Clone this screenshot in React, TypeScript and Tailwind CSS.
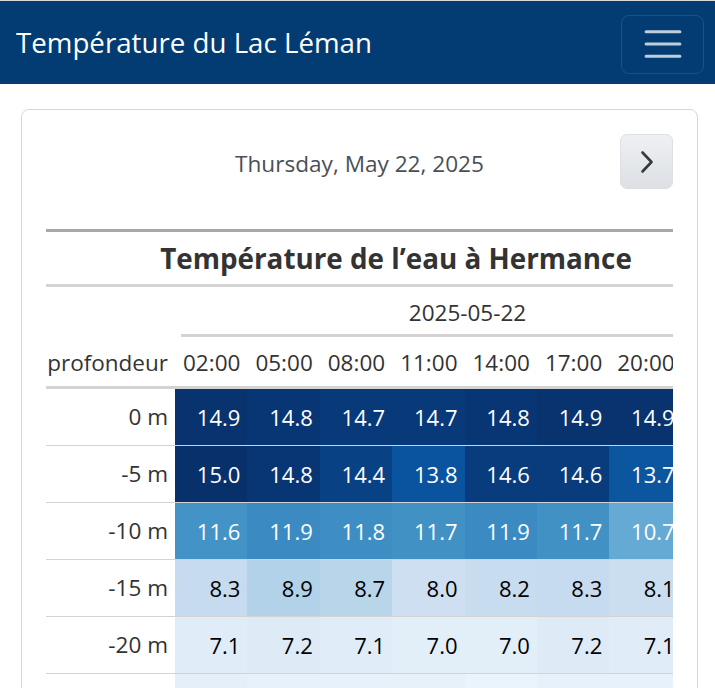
import React from "react";

// matplotlib "Blues" stops
const BLUES = ["#f7fbff", "#deebf7", "#c6dbef", "#9ecae1", "#6baed6", "#4292c6", "#2171b5", "#08519c", "#08306b"];
const VMIN = 6.07;
const VMAX = 15.0;

const hexToRgb = (h: string) => [parseInt(h.slice(1, 3), 16), parseInt(h.slice(3, 5), 16), parseInt(h.slice(5, 7), 16)];

const cellColor = (v: number) => {
  let t = (v - VMIN) / (VMAX - VMIN);
  t = Math.max(0, Math.min(1, t));
  const pos = t * (BLUES.length - 1);
  const i = Math.min(Math.floor(pos), BLUES.length - 2);
  const f = pos - i;
  const a = hexToRgb(BLUES[i]);
  const b = hexToRgb(BLUES[i + 1]);
  const rgb = a.map((c, k) => Math.round(c + (b[k] - c) * f));
  return { bg: `rgb(${rgb[0]}, ${rgb[1]}, ${rgb[2]})`, light: t > 0.5 };
};

const hours = ["02:00", "05:00", "08:00", "11:00", "14:00", "17:00", "20:00", "23:00"];

const rows: { depth: string; values: number[] }[] = [
  { depth: "0 m", values: [14.9, 14.8, 14.7, 14.7, 14.8, 14.9, 14.9, 14.9] },
  { depth: "-5 m", values: [15.0, 14.8, 14.4, 13.8, 14.6, 14.6, 13.7, 14.2] },
  { depth: "-10 m", values: [11.6, 11.9, 11.8, 11.7, 11.9, 11.7, 10.7, 11.3] },
  { depth: "-15 m", values: [8.3, 8.9, 8.7, 8.0, 8.2, 8.3, 8.1, 8.2] },
  { depth: "-20 m", values: [7.1, 7.2, 7.1, 7.0, 7.0, 7.2, 7.1, 7.1] },
  { depth: "-25 m", values: [6.9, 6.8, 6.8, 6.8, 6.6, 6.8, 6.8, 6.8] },
  { depth: "-30 m", values: [6.6, 6.6, 6.6, 6.6, 6.5, 6.6, 6.6, 6.6] },
];

const font = { fontFamily: '"Open Sans", "Noto Sans", sans-serif' };

export default function App() {
  return (
    <div className="min-h-screen bg-white" style={font}>
      {/* barre de navigation */}
      <nav className="border-t border-[#d6d9dc] bg-[#033c73] h-[84px] flex items-center justify-between pl-[16px] pr-[11px]">
        <span className="text-white text-[27.7px] leading-none pt-[1px]">Température du Lac Léman</span>
        <button
          type="button"
          className="w-[83px] h-[59px] mt-[3px] rounded-[8px] border border-white/10 flex items-center justify-center"
        >
          <svg width="46" height="46" viewBox="0 0 30 30">
            <path
              d="M4 7h22M4 15h22M4 23h22"
              stroke="rgba(255,255,255,0.75)"
              strokeWidth="2"
              strokeLinecap="round"
              fill="none"
            />
          </svg>
        </button>
      </nav>

      {/* carte principale */}
      <div className="ml-[21px] mt-[25px] w-[677px] rounded-[8px] border border-[#d6d6d6] px-[24px] pt-[24px] pb-[30px]">
        <div className="grid grid-cols-[1fr_auto_1fr] items-center">
          <div />
          <div className="text-[22.6px] text-[#495057] pt-[4px]">Thursday, May 22, 2025</div>
          <div className="flex justify-end">
            <button
              type="button"
              className="w-[53px] h-[55px] rounded-[7px] border border-[#dcdfe3] bg-gradient-to-b from-[#eef0f2] to-[#dde0e4] flex items-center justify-center"
            >
              <svg width="14" height="24" viewBox="0 0 14 24">
                <path d="M2.5 2.5 L11.5 12 L2.5 21.5" stroke="#343a40" strokeWidth="2.6" fill="none" strokeLinecap="round" strokeLinejoin="round" />
              </svg>
            </button>
          </div>
        </div>

        <div className="mt-[40px] w-[627px] overflow-hidden">
          <table className="w-[708px] table-fixed border-separate border-spacing-0 text-[#333]">
            <colgroup>
              <col className="w-[129px]" />
              {hours.map((h) => (
                <col key={h} />
              ))}
            </colgroup>
            <thead>
              <tr>
                <th colSpan={9} className="p-0 border-t-[3px] border-b-[3px] border-t-[#a8a8a8] border-b-[#d3d3d3]">
                  <div className="h-[52px] flex items-center justify-center pr-[8px] pt-[2px] text-[27.8px] font-bold text-[#333]">
                    Température de l’eau à Hermance
                  </div>
                </th>
              </tr>
              <tr>
                <th className="p-0" />
                <th colSpan={8} className="p-0 pl-[6px] font-normal">
                  <div className="h-[50px] border-b-[3px] border-[#d3d3d3] flex items-center justify-center pt-[4px] text-[22.5px]">
                    2025-05-22
                  </div>
                </th>
              </tr>
              <tr>
                <th className="p-0 font-normal border-b-[3px] border-[#d3d3d3]">
                  <div className="h-[49px] flex items-center justify-end pr-[7px] pt-[2px] text-[22.5px]">profondeur</div>
                </th>
                {hours.map((h) => (
                  <th key={h} className="p-0 font-normal border-b-[3px] border-[#d3d3d3]">
                    <div className="h-[49px] flex items-center justify-end pr-[7px] pt-[2px] text-[22.5px]">{h}</div>
                  </th>
                ))}
              </tr>
            </thead>
            <tbody>
              {rows.map((r) => (
                <tr key={r.depth}>
                  <td className="p-0 border-b border-[#d3d3d3]">
                    <div className="h-[56px] flex items-center justify-end pr-[7px] text-[22.5px] text-[#333]">{r.depth}</div>
                  </td>
                  {r.values.map((v, i) => {
                    const c = cellColor(v);
                    return (
                      <td key={i} className="p-0 border-b border-[#d3d3d3]" style={{ backgroundColor: c.bg }}>
                        <div
                          className={
                            "h-[56px] flex items-center justify-end pr-[7px] pt-[1px] text-[22px] " +
                            (c.light ? "text-white" : "text-black")
                          }
                        >
                          {v.toFixed(1)}
                        </div>
                      </td>
                    );
                  })}
                </tr>
              ))}
            </tbody>
          </table>
        </div>
      </div>
    </div>
  );
}
